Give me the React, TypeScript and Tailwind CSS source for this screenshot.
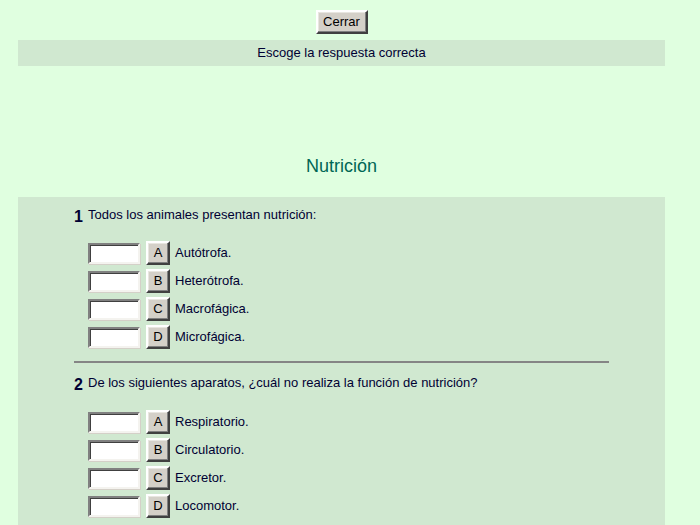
import React from "react";

const questions = [
  {
    n: "1",
    text: "Todos los animales presentan nutrición:",
    opts: ["Autótrofa.", "Heterótrofa.", "Macrofágica.", "Microfágica."],
  },
  {
    n: "2",
    text: "De los siguientes aparatos, ¿cuál no realiza la función de nutrición?",
    opts: ["Respiratorio.", "Circulatorio.", "Excretor.", "Locomotor."],
  },
];

const letters = ["A", "B", "C", "D"];

function WinButton({ children, className }: { children: React.ReactNode; className?: string }) {
  return (
    <button
      type="button"
      className={
        "flex items-center justify-center p-0 bg-[#d4d0c8] text-[13px] leading-[15px] text-black border-2 border-t-white border-l-white border-r-[#404040] border-b-[#404040] shadow-[inset_-1px_-1px_0_#808080,inset_1px_1px_0_#e8e6e0] " +
        (className ?? "")
      }
    >
      <span className="-mt-[1px]">{children}</span>
    </button>
  );
}

function Option({ letter, label }: { letter: string; label: string }) {
  return (
    <div className="flex h-[28px] items-center">
      <input
        type="text"
        readOnly
        className="h-[21px] w-[52px] bg-white p-0 border-2 border-t-[#808080] border-l-[#808080] border-b-[#f4f3ef] border-r-[#f4f3ef] shadow-[inset_1px_1px_0_#404040,1px_1px_0_#d4d0c8] outline-none"
      />
      <WinButton className="ml-[6px] h-[24px] w-[24px]">{letter}</WinButton>
      <span className="ml-[5px] text-[13px] leading-[16px]">{label}</span>
    </div>
  );
}

export default function App() {
  return (
    <div className="min-h-[525px] bg-[#e0ffe0] font-['Liberation_Sans',Arial,sans-serif] text-[#000033]">
      <div className="ml-[18px] w-[647px]">
        <div className="flex justify-center pt-[10px]">
          <WinButton className="h-[24px] w-[52px]">Cerrar</WinButton>
        </div>
        <div className="mt-[6px] flex h-[26px] items-center justify-center bg-[#d0e8d0] text-[13px]">
          Escoge la respuesta correcta
        </div>
        <div className="mt-[89px] text-center text-[18px] leading-[22px] text-[#006655]">Nutrición</div>
        <div className="mt-[20px] bg-[#d0e8d0] pb-[20px] pt-[10px]">
          {questions.map((q, qi) => (
            <div key={q.n}>
              {qi > 0 && <div className="mx-[56px] mt-[10px] h-[2px] bg-[#858585]" />}
              <div className={"flex items-start pl-[56px] " + (qi > 0 ? "mt-[12px]" : "")}>
                <span className="mt-[2px] w-[14px] text-[16px] font-bold leading-[16px]">{q.n}</span>
                <span className="text-[13px] leading-[16px]">{q.text}</span>
              </div>
              <div className={"pl-[70px] " + (qi > 0 ? "mt-[15px]" : "mt-[14px]")}>
                {q.opts.map((o, i) => (
                  <Option key={o} letter={letters[i]} label={o} />
                ))}
              </div>
            </div>
          ))}
        </div>
      </div>
    </div>
  );
}
